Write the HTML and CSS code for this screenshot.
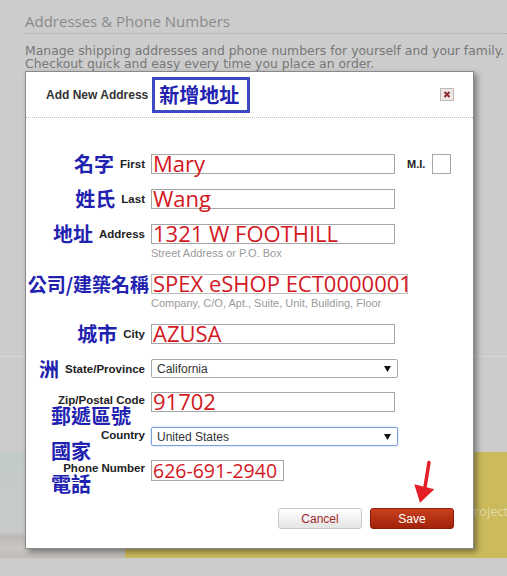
FILE: index.html
```html
<!DOCTYPE html>
<html>
<head>
    <title>Addresses &amp; Phone Numbers</title>
    <link rel="stylesheet" href="styles.css">
</head>
<body>
    <div class="page-head">
        <h1 class="page-title">Addresses &amp; Phone Numbers</h1>
        <p class="page-intro">Manage shipping addresses and phone numbers for yourself and your family.<br>Checkout quick and easy every time you place an order.</p>
    </div>
    <div class="content-area"></div>
    <div class="spacer"></div>
    <div class="banner">
        <div class="banner-photo"></div>
        <div class="banner-promo">Projects</div>
    </div>

    <div class="modal">
        <div class="modal-head">
            <span class="modal-title">Add New Address</span>
            <span class="zh-tag">新增地址</span>
            <span class="close-btn">
                <svg width="12" height="11" viewBox="0 0 12 11"><path d="M3.5 3L8.5 8M8.5 3L3.5 8" stroke="#8e2b2b" stroke-width="2"/></svg>
            </span>
        </div>

        <div class="modal-body">
            <div class="row mb15">
                <div class="label"><span class="zh">名字</span><span class="en">First</span></div>
                <div class="field w-main"><span class="value">Mary</span></div>
                <span class="en mi-label">M.I.</span>
                <div class="field w-mi"></div>
            </div>

            <div class="row mb15">
                <div class="label"><span class="zh">姓氏</span><span class="en">Last</span></div>
                <div class="field w-main"><span class="value">Wang</span></div>
            </div>

            <div class="row mb14">
                <div class="label"><span class="zh">地址</span><span class="en">Address</span></div>
                <div class="field-col">
                    <div class="field w-main"><span class="value">1321 W FOOTHILL</span></div>
                    <div class="hint">Street Address or P.O. Box</div>
                </div>
            </div>

            <div class="row mb14">
                <div class="label"><span class="zh zh-long">公司/建築名稱</span></div>
                <div class="field-col">
                    <div class="field w-wide light"><span class="value">SPEX eSHOP ECT0000001</span></div>
                    <div class="hint">Company, C/O, Apt., Suite, Unit, Building, Floor</div>
                </div>
            </div>

            <div class="row mb15">
                <div class="label"><span class="zh">城市</span><span class="en">City</span></div>
                <div class="field w-main"><span class="value">AZUSA</span></div>
            </div>

            <div class="row mb13">
                <div class="label"><span class="zh">洲</span><span class="en">State/Province</span></div>
                <div class="select">
                    <span>California</span>
                    <svg width="7" height="6" viewBox="0 0 7 6"><path d="M0 0H7L3.5 6Z" fill="#111"/></svg>
                </div>
            </div>

            <div class="row mb15">
                <div class="label stack"><span class="en">Zip/Postal Code</span><span class="zh">郵遞區號</span></div>
                <div class="field w-main"><span class="value">91702</span></div>
            </div>

            <div class="row mb13">
                <div class="label stack"><span class="en">Country</span><span class="zh">國家</span></div>
                <div class="select focused">
                    <span>United States</span>
                    <svg width="7" height="6" viewBox="0 0 7 6"><path d="M0 0H7L3.5 6Z" fill="#111"/></svg>
                </div>
            </div>

            <div class="row mb27">
                <div class="label stack"><span class="en">Phone Number</span><span class="zh">電話</span></div>
                <div class="field w-phone"><span class="value small">626-691-2940</span></div>
            </div>

            <div class="actions">
                <button class="btn btn-cancel">Cancel</button>
                <button class="btn btn-save">Save</button>
            </div>
        </div>

        <svg class="arrow" width="30" height="48" viewBox="0 0 30 48">
            <path d="M20 3.5L16 28" stroke="#e41e26" stroke-width="3.5" stroke-linecap="round"/>
            <path d="M5.3 25.3L25.3 30.3L11 43.7Z" fill="#e41e26"/>
        </svg>
    </div>
</body>
</html>
```

FILE: styles.css
```css
* {
    box-sizing: border-box;
}

body {
    margin: 0;
    width: 507px;
    height: 576px;
    overflow: hidden;
    position: relative;
    background: #cccccc;
    font-family: "Liberation Sans", Arial, sans-serif;
}

/* page behind the dialog */
.page-head {
    padding: 11px 0 0 25px;
}

.page-title {
    margin: 0;
    padding-bottom: 2px;
    font: 400 15px/20px "Open Sans", sans-serif;
    color: #8a8a8a;
    border-bottom: 1px dotted #a6a6a6;
}

.page-intro {
    margin: 10px 0 0;
    font: 12.4px/13px "DejaVu Sans", Verdana, sans-serif;
    color: #777;
    white-space: nowrap;
}

.content-area {
    height: 287px;
    border-bottom: 1px solid #d6d6d6;
}

.spacer {
    height: 95px;
}

.banner {
    display: flex;
    height: 106px;
}

.banner-photo {
    width: 125px;
    background: linear-gradient(#c3caca 0, #c7cccb 74%, #bdbab5 80%, #cac7c2 90%, #bebbb6 100%);
}

.banner-promo {
    flex: 1;
    padding: 50px 0 0 341px;
    background: #cbbb5c;
    font: 13px "Open Sans", sans-serif;
    color: rgba(255, 255, 255, 0.45);
    white-space: nowrap;
    overflow: hidden;
}

/* dialog */
.modal {
    position: absolute;
    left: 25px;
    top: 71px;
    width: 449px;
    background: #fff;
    border: 1px solid #8a8a8a;
    box-shadow: 3px 3px 6px rgba(0, 0, 0, 0.4);
}

.modal-head {
    display: flex;
    align-items: center;
    height: 46px;
    padding-left: 20px;
    border-bottom: 1px dotted #bcbcbc;
}

.modal-title {
    font-size: 12px;
    font-weight: bold;
    color: #333;
}

.zh-tag {
    display: flex;
    align-items: center;
    width: 98px;
    height: 36px;
    margin-left: 4px;
    padding-left: 4px;
    border: 3px solid #3c4bc3;
    font: 700 20px/1 "Noto Sans CJK TC", sans-serif;
    color: #2222b0;
}

.close-btn {
    display: flex;
    width: 14px;
    height: 13px;
    margin-left: auto;
    margin-right: 19px;
    background: #efe7e7;
    border: 1px solid #c0b8b8;
}

.modal-body {
    padding: 36px 19px 19px 0;
}

.row {
    display: flex;
    align-items: flex-start;
}

.mb13 { margin-bottom: 13px; }
.mb14 { margin-bottom: 14px; }
.mb15 { margin-bottom: 15px; }
.mb27 { margin-bottom: 27px; }

.label {
    display: flex;
    align-items: center;
    justify-content: flex-end;
    flex-shrink: 0;
    width: 119px;
    height: 20px;
    margin-right: 6px;
    white-space: nowrap;
}

.label.stack {
    display: block;
    text-align: right;
}

.zh {
    font: 700 20px/20px "Noto Sans CJK TC", sans-serif;
    color: #2222b0;
    margin-right: 6px;
}

.zh-long {
    font-size: 19px;
    margin-right: -4px;
}

.en {
    font-size: 11.5px;
    font-weight: bold;
    line-height: 13px;
    color: #222;
}

.stack .en {
    display: block;
    margin-top: 2px;
}

.stack .zh {
    display: block;
    margin: 0;
    padding-left: 25px;
    line-height: 18px;
    text-align: left;
}

.mi-label {
    width: 25px;
    height: 20px;
    margin-left: 12px;
    font-size: 11px;
    line-height: 20px;
}

.field {
    height: 20px;
    padding-left: 1px;
    background: #fff;
    border: 1px solid #a6a6a6;
    white-space: nowrap;
}

.field.light {
    border-color: #bdbdbd;
}

.w-main { width: 244px; }
.w-wide { width: 257px; }
.w-mi { width: 19px; }
.w-phone { width: 133px; height: 21px; }

.value {
    font: 22px/17px "Open Sans", sans-serif;
    color: #d3181f;
}

.value.small {
    font-size: 19.5px;
    line-height: 19.5px;
}

.field-col {
    display: flex;
    flex-direction: column;
}

.hint {
    margin-top: 3px;
    font-size: 11px;
    line-height: 13px;
    color: #9a9a9a;
    white-space: nowrap;
}

.select {
    display: flex;
    align-items: center;
    justify-content: space-between;
    width: 247px;
    height: 19px;
    padding: 0 6px 0 5px;
    background: #fff;
    border: 1px solid #a9a9a9;
    border-radius: 2px;
    font-size: 12px;
    color: #333;
}

.select.focused {
    border-color: #7da2db;
    box-shadow: 0 0 2px rgba(90, 140, 220, 0.5);
}

.actions {
    display: flex;
    justify-content: flex-end;
    gap: 8px;
}

.btn {
    width: 84px;
    height: 21px;
    padding: 0;
    border-radius: 3px;
    font-family: "Liberation Sans", Arial, sans-serif;
    font-size: 12px;
    cursor: pointer;
}

.btn-cancel {
    background: linear-gradient(#ffffff, #e4e4e4);
    border: 1px solid #c8c8c8;
    color: #a3272a;
}

.btn-save {
    background: linear-gradient(#c8401e, #a2220a);
    border: 1px solid #8f1c08;
    color: #fff;
}

/* annotation arrow drawn over the dialog */
.arrow {
    position: absolute;
    left: 383px;
    top: 387px;
}
```
